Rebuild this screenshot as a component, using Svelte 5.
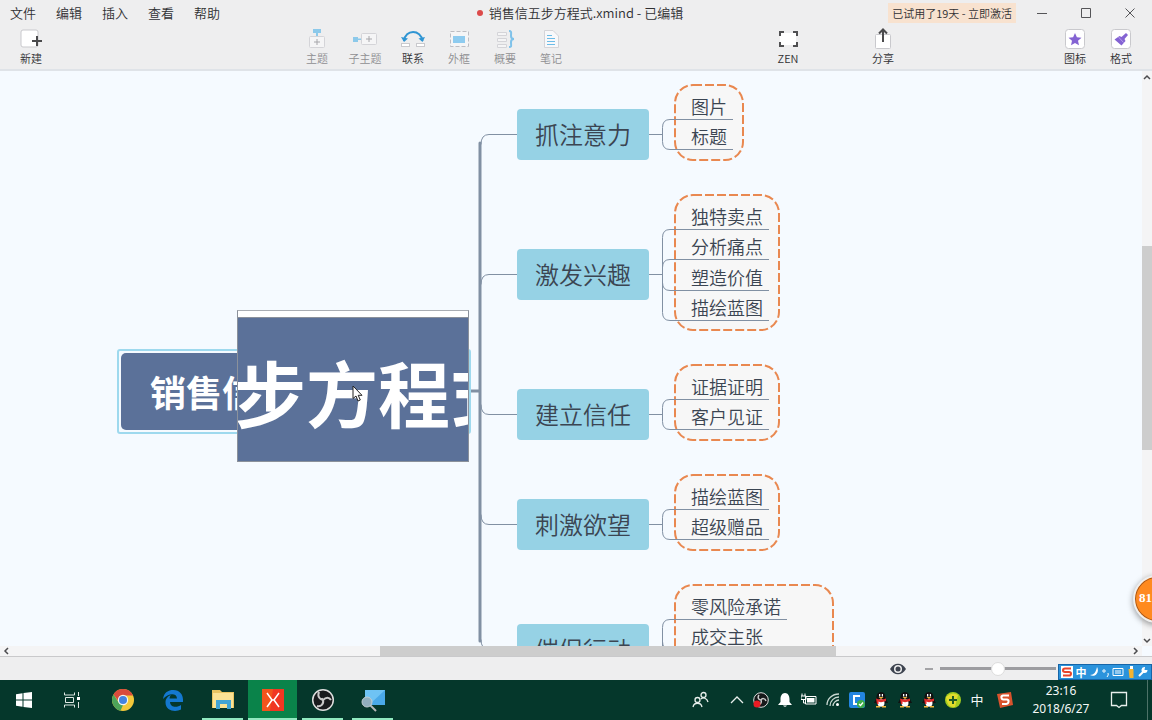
<script lang="ts">
  type Branch = {
    title: string;
    y: number;
    firstLine: number;
    children: string[];
    right?: number;
  };

  const menus = ["文件", "编辑", "插入", "查看", "帮助"];

  // y is the vertical centre of a main topic, firstLine the underline of its first subtopic
  const branches: Branch[] = [
    { title: "抓注意力", y: 63, firstLine: 48, children: ["图片", "标题"] },
    { title: "激发兴趣", y: 203, firstLine: 158, children: ["独特卖点", "分析痛点", "塑造价值", "描绘蓝图"] },
    { title: "建立信任", y: 343, firstLine: 328, children: ["证据证明", "客户见证"] },
    { title: "刺激欲望", y: 453, firstLine: 438, children: ["描绘蓝图", "超级赠品"] },
    { title: "催促行动", y: 578, firstLine: 548, children: ["零风险承诺", "成交主张"], right: 833 },
  ];

  const rootY = 320;
  const trunkX = 480;
  const rowPitch = 30.4;

  const lineY = (b: Branch, i: number) => Math.round(b.firstLine + i * rowPitch) + 0.5;
  const lineEnd = (text: string) => 691 + text.length * 18 + 6;
  const boundaryRight = (b: Branch) => b.right ?? lineEnd(b.children[0]) + 10;

  function branchPath(b: Branch) {
    const y = b.y + 0.5;
    const from = b.y < rootY ? y + 10 : y - 10;
    return `M${trunkX + 1} ${from}Q${trunkX + 1} ${y} ${trunkX + 9} ${y}H517`;
  }

  function childPath(b: Branch, i: number) {
    const y = lineY(b, i);
    const turn = y < b.y ? y + 8 : y - 8;
    return `M662.5 ${b.y}V${turn}Q662.5 ${y} 670 ${y}H${lineEnd(b.children[i])}`;
  }

  let zoom = 50;
</script>

<div class="desktop">
  <header class="titlebar">
    <nav>
      {#each menus as menu}
        <button>{menu}</button>
      {/each}
    </nav>
    <h1><span class="dirty"></span>销售信五步方程式.xmind - 已编辑</h1>
    <div class="window-tools">
      <button class="trial">已试用了19天 - 立即激活</button>
      <button class="win" aria-label="最小化"><svg width="12" height="12"><path d="M1 6.500H11" /></svg></button>
      <button class="win" aria-label="最大化"><svg width="12" height="12"><path d="M1.500 1.500H10.500V10.500H1.500Z" /></svg></button>
      <button class="win" aria-label="关闭"><svg width="12" height="12"><path d="M1.500 1.500L10.500 10.500M10.500 1.500L1.500 10.500" /></svg></button>
    </div>
  </header>

  <div class="toolbar">
    <div class="tools">
      <button class="tool">
        <svg width="26" height="24" viewBox="0 0 26 24">
          <rect x="3" y="3" width="17" height="17" rx="2" fill="#fff" stroke="#c9c9cd" />
          <path d="M14 14H24M19 9V19" stroke="#4a4a4c" stroke-width="2" />
        </svg>
        新建
      </button>
    </div>
    <div class="tools">
      <button class="tool" disabled>
        <svg width="26" height="24" viewBox="0 0 26 24">
          <path d="M9 2H17V6H14V9H12V6H9Z" fill="#8cc9ea" />
          <rect x="5.500" y="9.500" width="15" height="11" rx="1" fill="#f5f5f6" stroke="#d4d4d8" />
          <path d="M10 15H16M13 12V18" stroke="#a6a6aa" />
        </svg>
        主题
      </button>
      <button class="tool long" disabled>
        <svg width="26" height="24" viewBox="0 0 26 24">
          <path d="M1 10H6V11.500H9V13H6V15H1Z" fill="#8cc9ea" />
          <rect x="9.500" y="6.500" width="15" height="11" rx="1" fill="#f5f5f6" stroke="#d4d4d8" />
          <path d="M14 12H20M17 9V15" stroke="#a6a6aa" />
        </svg>
        子主题
      </button>
      <button class="tool">
        <svg width="26" height="24" viewBox="0 0 26 24">
          <path d="M4 14C5 2 21 2 22.500 14" fill="none" stroke="#2f95d3" stroke-width="2" />
          <path d="M1 10L4 15L8 11.500ZM18.500 11.500L22.500 15L25 10Z" fill="#2f95d3" />
          <rect x="1.500" y="16.500" width="8" height="3" fill="#fff" stroke="#c9c9cd" />
          <rect x="16.500" y="16.500" width="8" height="3" fill="#fff" stroke="#c9c9cd" />
        </svg>
        联系
      </button>
      <button class="tool" disabled>
        <svg width="26" height="24" viewBox="0 0 26 24">
          <rect x="4.500" y="4.500" width="18" height="15" fill="#f5f5f6" stroke="#bdbdc2" stroke-dasharray="4 2" />
          <rect x="7" y="9" width="12" height="7" fill="#8ecbef" />
        </svg>
        外框
      </button>
      <button class="tool" disabled>
        <svg width="26" height="24" viewBox="0 0 26 24">
          <path d="M5.500 5.500H14.500V8.500H5.500ZM5.500 11.500H14.500V14.500H5.500ZM5.500 17.500H14.500V20.500H5.500Z" fill="#f5f5f6" stroke="#d4d4d8" />
          <path d="M17 4C20 4 19 6 19 9C19 11 20 12 22 12C20 12 19 13 19 15C19 19 20 20 17 20" fill="none" stroke="#7fc2ea" stroke-width="2" />
        </svg>
        概要
      </button>
      <button class="tool" disabled>
        <svg width="26" height="24" viewBox="0 0 26 24">
          <path d="M6.500 3.500H15L20.500 9V20.500H6.500Z" fill="#f8f8fa" stroke="#d4d4d8" />
          <path d="M9 8.500H14M9 11.500H17M9 14.500H17M9 17.500H17" stroke="#6cbce8" />
        </svg>
        笔记
      </button>
    </div>
    <div class="tools wide">
      <button class="tool">
        <svg width="26" height="24" viewBox="0 0 26 24">
          <rect x="5" y="6" width="16" height="12" fill="#fff" />
          <path d="M5 9V5H9M18 5H22V9M22 15V19H18M9 19H5V15" fill="none" stroke="#505052" stroke-width="2" />
        </svg>
        ZEN
      </button>
      <button class="tool">
        <svg width="26" height="24" viewBox="0 0 26 24">
          <rect x="5.500" y="7.500" width="15" height="14" rx="1" fill="#fff" stroke="#c9c9cd" />
          <path d="M13 15V3M9 6.500L13 2.500L17 6.500" fill="none" stroke="#4a4a4c" stroke-width="2" />
        </svg>
        分享
      </button>
    </div>
    <div class="tools end">
      <button class="tool">
        <svg width="26" height="24" viewBox="0 0 26 24">
          <rect x="3.500" y="2.500" width="19" height="19" rx="3" fill="#fff" stroke="#c9c9cd" />
          <path d="M13 6L14.900 10.200L19.500 10.700L16 13.700L17 18.200L13 15.900L9 18.200L10 13.700L6.500 10.700L11.100 10.200Z" fill="#8463d3" />
        </svg>
        图标
      </button>
      <button class="tool">
        <svg width="26" height="24" viewBox="0 0 26 24">
          <rect x="3.500" y="2.500" width="19" height="19" rx="3" fill="#fff" stroke="#c9c9cd" />
          <path d="M18 6L20 8L16.500 12L17.500 14L13.500 18.500L6.500 12.500L11.500 9L13.500 10Z" fill="#8463d3" />
          <path d="M10.500 10L15.500 15.500" stroke="#b59ceb" />
        </svg>
        格式
      </button>
    </div>
  </div>

  <main class="pane">
    <div class="canvas">
      <svg class="wires">
        {#each branches as b}
          <rect
            class="boundary"
            x="675"
            y={b.firstLine - 34}
            width={boundaryRight(b) - 675}
            height={b.right ? 110 : (b.children.length - 1) * 30 + 45}
            rx="18"
          />
          <path d={branchPath(b)} />
          <path d="M649 {b.y + 0.5}H662" />
          {#each b.children as _, i}
            <path d={childPath(b, i)} />
          {/each}
        {/each}
        <path class="trunk" d="M{trunkX} 72V570M468 {rootY}H{trunkX}" />
      </svg>

      <div class="root-topic"><span>销售信五步方程式</span></div>

      {#each branches as b}
        <div class="topic" style:top="{b.y - 25}px">{b.title}</div>
        {#each b.children as child, i}
          <div class="subtopic" style:top="{Math.round(b.firstLine + i * rowPitch) - 25}px">{child}</div>
        {/each}
      {/each}

      <div class="magnifier"><span>步方程式</span></div>
      <svg class="cursor" width="12" height="18" viewBox="0 0 12 18">
        <path d="M1 1V13.500L4 11L6 16L8.300 15L6.200 10.300H10Z" fill="#fff" stroke="#222" />
      </svg>
    </div>

    <div class="scroll vertical">
      <svg width="10" height="12"><path d="M2 8L5 5L8 8" /></svg>
      <i class="before"></i><i class="thumb"></i><i class="after"></i>
      <svg width="10" height="12"><path d="M2 5L5 8L8 5" /></svg>
    </div>
    <div class="scroll horizontal">
      <svg width="14" height="10"><path d="M8 2L5 5L8 8" /></svg>
      <i class="before"></i><i class="thumb"></i><i class="after"></i>
      <svg width="14" height="10"><path d="M6 2L9 5L6 8" /></svg>
    </div>
    <div class="bubble">81</div>
  </main>

  <footer class="status">
    <button class="eye" aria-label="显示">
      <svg width="18" height="12" viewBox="0 0 18 12">
        <path d="M1 6C5 -1 13 -1 17 6C13 13 5 13 1 6Z" fill="#3d434f" />
        <circle cx="9" cy="6" r="4" fill="#eee" />
        <circle cx="9" cy="6" r="2.500" fill="#3d434f" />
      </svg>
    </button>
    <button class="minus" aria-label="缩小"><svg width="8" height="2"><path d="M0 1H8" stroke="#a3a3a6" stroke-width="2" /></svg></button>
    <input type="range" min="0" max="100" bind:value={zoom} aria-label="缩放" />
    <div class="ime">
      <svg width="12" height="12" viewBox="0 0 12 12">
        <rect width="12" height="12" fill="#fff" />
        <path d="M10 2.500H4Q2 2.500 2 4.200T4 6H8Q10 6 10 7.800T8 9.500H2" fill="none" stroke="#e8452c" stroke-width="2" />
      </svg>
      <b>中</b>
      <svg width="10" height="12" viewBox="0 0 10 12"><path d="M8 1C11 6 6 12 1 9C5 9 7 6 8 1Z" fill="#fff" /></svg>
      <svg width="8" height="12" viewBox="0 0 8 12"><circle cx="2" cy="5" r="1.200" fill="none" stroke="#fff" /><path d="M6 7Q7 9 5 11" fill="none" stroke="#fff" /></svg>
      <svg width="12" height="12" viewBox="0 0 12 12"><path d="M1 2.500H11V9.500H1ZM3 5H9M3 7H9" fill="none" stroke="#fff" /></svg>
      <svg width="8" height="12" viewBox="0 0 8 12"><path d="M3 0H6V3H3Z" fill="#fff" /><path d="M1.500 3H6.500V12H2.500Z" fill="#f3b331" /></svg>
      <svg width="12" height="12" viewBox="0 0 12 12"><path d="M2 10L7 5" stroke="#fff" stroke-width="2" /><path d="M10.500 4A3 3 0 1 1 8 1L7.500 4Z" fill="#fff" /></svg>
    </div>
  </footer>

  <div class="taskbar">
    <div class="system">
      <button aria-label="开始">
        <svg width="18" height="18" viewBox="0 0 18 18"><path d="M1 3.300L7.500 2.300V8.500H1ZM8.500 2.100L17 1V8.500H8.500ZM1 9.500H7.500V15.700L1 14.700ZM8.500 9.500H17V17L8.500 15.900Z" fill="#fff" /></svg>
      </button>
      <button aria-label="任务视图">
        <svg width="18" height="18" viewBox="0 0 18 18">
          <path d="M1.500 1.500V4H11.500V1.500M1.500 16.500V14H11.500V16.500M2.500 6.500H10.500V11.500H2.500ZM15.500 1V5M15.500 11V17" fill="none" stroke="#dfe8e4" />
          <rect x="14" y="6" width="3" height="3" fill="#fff" />
        </svg>
      </button>
    </div>
    <div class="apps">
      <button aria-label="Chrome">
        <svg width="24" height="24" viewBox="0 0 24 24">
          <circle cx="12" cy="12" r="11" fill="#f4c83a" />
          <path d="M2.500 6.500A11 11 0 0 1 22 7.500H12L8 14Z" fill="#d94b3d" />
          <path d="M2.500 6.500L8 15L12 17L9.500 22.700A11 11 0 0 1 2.500 6.500Z" fill="#4da45a" />
          <circle cx="12" cy="12" r="5.200" fill="#f5f5f5" />
          <circle cx="12" cy="12" r="4" fill="#4583e0" />
        </svg>
      </button>
      <button aria-label="Edge">
        <svg width="24" height="24" viewBox="0 0 24 24"><path d="M2 11C3 4.500 7 2 12.500 2C18.500 2 22 6.500 22 11.500V14H9C9.500 20 16.500 19.500 20 17V21.500C14.500 24.500 4.500 23 4.500 14.500C4.500 10.500 7 8 10 7C9 8 8.600 9.300 8.600 10.500H16C16 4.500 7 5 2 11Z" fill="#1478cf" /></svg>
      </button>
      <button class="open" aria-label="文件资源管理器">
        <svg width="24" height="24" viewBox="0 0 24 24">
          <path d="M1 2H9L11 4H23V20H1Z" fill="#e9c562" />
          <path d="M2 5H22V20H2Z" fill="#fbe394" />
          <path d="M5 12H20V21H16V16H9V21H5Z" fill="#43a5d4" />
        </svg>
      </button>
      <button class="open active" aria-label="XMind">
        <svg width="24" height="24" viewBox="0 0 24 24">
          <rect x="1" y="1" width="22" height="22" fill="#f03622" />
          <path d="M1 1H12L9 23H1Z" fill="#f2541c" />
          <path d="M6 5L11 12H13L18 5M6 19L11 12M13 12L18 19" fill="none" stroke="#fff" stroke-width="1.500" />
        </svg>
      </button>
      <button class="open" aria-label="OBS">
        <svg width="24" height="24" viewBox="0 0 24 24">
          <circle cx="12" cy="12" r="10.300" fill="#191b1d" stroke="#dedede" stroke-width="1.500" />
          <path d="M8 4C6 9 9 11 12 12M12 12C15 9 18 9 20 12M12 12C13 16 10 19 6 18M12 12L10.500 10.500" fill="none" stroke="#c9c9c9" stroke-width="2" />
        </svg>
      </button>
      <button class="open" aria-label="放大镜">
        <svg width="26" height="24" viewBox="0 0 26 24">
          <path d="M5 2H25V17H5Z" fill="#4aa9e8" />
          <path d="M5 2H25L9 17H5Z" fill="#6fc3f4" />
          <path d="M10 17L16 23" stroke="#b8b8b8" stroke-width="2" />
          <circle cx="7" cy="14" r="5" fill="#91aebd" stroke="#c1cdd2" />
        </svg>
      </button>
    </div>

    <div class="tray">
      <svg class="people" width="18" height="18" viewBox="0 0 18 18"><g fill="none" stroke="#e8efec" stroke-width="1.300"><circle cx="11.500" cy="4" r="2.500" /><circle cx="5.500" cy="9" r="2.500" /><path d="M1 16C2 11 9 11 10 16M9 8C11 6 15 7 16 11" /></g></svg>
      <svg width="16" height="16" viewBox="0 0 16 16"><path d="M2 11L8 5L14 11" fill="none" stroke="#e8efec" stroke-width="1.300" /></svg>
      <svg width="16" height="16" viewBox="0 0 16 16"><circle cx="8" cy="8" r="7.300" fill="#17191a" stroke="#ddd" /><path d="M6 3C4 6 6 8 8 8C9 6 12 6 13 9M8 8C9 11 7 13 5 12" fill="none" stroke="#ccc" stroke-width="1.500" /><circle cx="4" cy="12" r="3.500" fill="#ec1c24" /></svg>
      <svg width="16" height="16" viewBox="0 0 16 16"><path d="M8 1C11 1 12.500 4 12.500 7V10L15 13H1L3.500 10V7C3.500 4 5 1 8 1ZM6 13.500H10Q8 16 6 13.500Z" fill="#fff" /></svg>
      <svg width="16" height="16" viewBox="0 0 16 16"><path d="M4.500 4.500H15V12H4.500ZM1 1.500V4M4 1.500V4M0 4H5V7.500H0ZM2.500 7.500V11H4" fill="none" stroke="#fff" /><rect x="6" y="6" width="7.500" height="4.500" fill="#fff" /></svg>
      <svg width="16" height="16" viewBox="0 0 16 16"><path d="M2 13C2 7 7 2 14 2M5 14C5 9 9 5 14 5M8 14C8 11 11 8 14 8" fill="none" stroke="#c9d8d1" stroke-width="1.300" /><circle cx="12.500" cy="12.500" r="1.500" fill="#fff" /></svg>
      <svg width="16" height="16" viewBox="0 0 16 16"><rect width="16" height="16" rx="2" fill="#2385e0" /><path d="M11 4H5V12H8" fill="none" stroke="#fff" stroke-width="2" /><circle cx="12" cy="12" r="4" fill="#3dae49" /><path d="M10 12L11.500 13.500L14 10.500" fill="none" stroke="#fff" stroke-width="1.300" /></svg>
      {#each [1, 2, 3] as _}
        <svg width="16" height="16" viewBox="0 0 16 16">
          <path d="M8 0C12 0 12.500 4 12.500 6L15 11L12.500 11Q12 15 8 15T3.500 11L1 11L3.500 6C3.500 4 4 0 8 0Z" fill="#111" />
          <ellipse cx="8" cy="11" rx="3.500" ry="3.800" fill="#fff" />
          <path d="M3 6.500Q8 8.500 13 6.500V9Q8 11 5.500 9.500V12H4Z" fill="#e02b2b" />
          <path d="M5.500 5H10.500L8 7ZM3 14H7V15.500H3ZM9 14H13V15.500H9Z" fill="#f4b63c" />
          <path d="M6 2H7.300V4.500H6ZM8.800 2H10V4.500H8.800Z" fill="#fff" />
        </svg>
      {/each}
      <svg width="16" height="16" viewBox="0 0 16 16"><circle cx="8" cy="8" r="8" fill="#a3cc1f" /><path d="M1 5Q7 -1 13 3L10 15Q2 16 1 5Z" fill="#e2dc2d" /><path d="M8 4V12M4 8H12" stroke="#205b25" stroke-width="2" /></svg>
      <span class="lang">中</span>
      <svg class="sogou" width="16" height="16" viewBox="0 0 16 16"><path d="M0 2L14 0L16 13L3 16Z" fill="#d9532d" /><path d="M12 3.500H6Q4 4 4.500 6T7 7.500H10Q12 8 11.500 10T9 12H5" fill="none" stroke="#fff" stroke-width="2" /></svg>
    </div>
    <time>23:16<br />2018/6/27</time>
    <button class="notice" aria-label="通知">
      <svg width="18" height="18" viewBox="0 0 18 18"><path d="M1.500 1.500H16.500V14.500H11.500L9 16.500L6.500 14.500H1.500Z" fill="none" stroke="#e8efec" stroke-width="1.300" /></svg>
    </button>
    <span class="peek"></span>
  </div>
</div>

<style>
  :global(body) {
    margin: 0;
    font-family: "Noto Sans CJK SC", "Noto Sans", sans-serif;
    font-weight: 350;
  }

  button {
    padding: 0;
    border: 0;
    background: none;
    color: inherit;
    font: inherit;
  }

  svg {
    display: block;
    flex: none;
  }

  .desktop {
    display: grid;
    grid-template-rows: 25px 46px 1fr 24px 40px;
    height: 100vh;
    overflow: hidden;
    background: #eeeeef;
    color: #303033;
  }

  /* Title bar */
  .titlebar {
    display: grid;
    grid-template-columns: 1fr auto 1fr;
    align-items: center;
    font-size: 13px;
    line-height: 24px;

    & nav {
      display: flex;
      gap: 20px;
      padding-left: 10px;
    }

    & h1 {
      display: flex;
      align-items: center;
      gap: 6px;
      margin: 0;
      padding-left: 8px;
      font-size: 13px;
      font-weight: 350;
    }
  }

  .dirty {
    width: 6px;
    height: 6px;
    border-radius: 50%;
    background: #dc4a4a;
  }

  .window-tools {
    display: flex;
    justify-content: flex-end;
    align-items: center;
  }

  .trial {
    margin-right: 4px;
    padding: 0 4px;
    background: #f8e2cf;
    font-size: 11px;
    line-height: 20px;
  }

  .win {
    display: grid;
    place-items: center;
    width: 44px;
    height: 24px;

    & path {
      fill: none;
      stroke: #555558;
    }
  }

  /* Toolbar */
  .toolbar {
    display: grid;
    grid-template-columns: 286fr 463fr 287fr 100px;
    padding: 0 8px;
    border-bottom: 2px solid #dfe3e8;
  }

  .tools {
    display: flex;
  }

  .wide {
    gap: 49px;
    padding-left: 8px;
  }

  .end {
    justify-content: flex-end;
  }

  .tool {
    display: flex;
    flex-direction: column;
    align-items: center;
    width: 46px;
    padding-top: 2px;
    font-size: 11px;
    line-height: 14px;
    white-space: nowrap;

    &:disabled {
      color: #8e8e92;
    }
  }

  .long {
    width: 50px;
  }

  /* Mind map */
  .pane {
    position: relative;
    display: grid;
    grid-template-columns: 1fr 10px;
    grid-template-rows: 1fr 10px;
    min-height: 0;
    background: #f5faff;
  }

  .canvas {
    position: relative;
    min-height: 0;
    overflow: hidden;
    color: #3b4552;
  }

  .wires {
    position: absolute;
    width: 100%;
    height: 100%;

    & path {
      fill: none;
      stroke: #8190a3;
    }

    & .trunk {
      stroke-width: 3;
      stroke-linecap: round;
    }

    & .boundary {
      fill: #f7f7f7;
      stroke: #e98850;
      stroke-width: 2;
      stroke-dasharray: 9 3;
    }
  }

  .root-topic {
    position: absolute;
    left: 117px;
    top: 278px;
    box-sizing: border-box;
    padding: 2px;
    border: 2px solid #9ed9ee;
    border-radius: 3px;

    & span {
      display: block;
      padding: 0 29px;
      border-radius: 5px;
      background: #5b7199;
      color: #fff;
      font-size: 36px;
      font-weight: 700;
      line-height: 77px;
    }
  }

  .topic {
    position: absolute;
    left: 517px;
    padding: 0 18px 2px;
    border-radius: 4px;
    background: #96d2e5;
    font-size: 24px;
    line-height: 49px;
  }

  .subtopic {
    position: absolute;
    left: 691px;
    font-size: 18px;
    line-height: 25px;
  }

  .magnifier {
    position: absolute;
    left: 237px;
    top: 239px;
    box-sizing: border-box;
    width: 232px;
    height: 152px;
    overflow: hidden;
    border: 1px solid #8b919b;
    border-top-color: #a9adb3;
    background: #fff;

    & span {
      display: block;
      margin-top: 6px;
      padding-bottom: 6px;
      border-top: 1px solid #8b919b;
      background: #5b7199;
      color: #fff;
      font-size: 72px;
      font-weight: 700;
      line-height: 146px;
      text-indent: -4px;
      white-space: nowrap;
    }
  }

  .cursor {
    position: absolute;
    left: 352px;
    top: 314px;
  }

  .scroll {
    display: flex;
    background: #f4f4f5;

    & path {
      fill: none;
      stroke: #4c4c4f;
      stroke-width: 1.5;
    }
  }

  .thumb {
    background: #cdcdcd;
  }

  .vertical {
    flex-direction: column;

    & .before {
      flex: 163;
    }
    & .thumb {
      flex: 205;
    }
    & .after {
      flex: 184;
    }
  }

  .horizontal {
    & .before {
      flex: 366;
    }
    & .thumb {
      flex: 456;
    }
    & .after {
      flex: 292;
    }
  }

  .bubble {
    position: absolute;
    right: -29px;
    bottom: 33px;
    box-sizing: border-box;
    width: 48px;
    height: 48px;
    padding-left: 4px;
    border: 2px solid #eee;
    border-radius: 50%;
    box-shadow: inset 0 0 0 1px #a8571a, 0 2px 6px #0006;
    background: #ff8a1f;
    color: #fff;
    font: bold 13px/42px "Liberation Serif", serif;
  }

  /* Status bar */
  .status {
    position: relative;
    display: flex;
    justify-content: flex-end;
    align-items: center;
    box-sizing: border-box;
    padding-right: 96px;
    border-top: 1px solid #c9c9cb;

    & input {
      width: 116px;
      height: 14px;
      margin: 0 0 0 7px;
      appearance: none;
      background: linear-gradient(#9c9ca0, #9c9ca0) center / 100% 3px no-repeat;
    }

    & input::-webkit-slider-thumb {
      width: 14px;
      height: 14px;
      appearance: none;
      border: 1px solid #dcdcdc;
      border-radius: 50%;
      background: #fff;
    }
  }

  .minus {
    margin-left: 18px;
  }

  .ime {
    position: absolute;
    right: 0;
    bottom: 0;
    display: flex;
    align-items: center;
    justify-content: space-between;
    box-sizing: border-box;
    width: 94px;
    height: 16px;
    padding: 0 2px;
    border: 1px solid #1665a8;
    background: #2b93dc;
    color: #fff;
    font-size: 11px;
    line-height: 14px;
  }

  /* Taskbar */
  .taskbar {
    display: flex;
    align-items: center;
    background: #05372b;
    color: #f4f8f6;
    font-weight: 400;

    & button {
      display: grid;
      place-items: center;
      height: 40px;
    }
  }

  .system {
    display: flex;

    & button {
      width: 48px;
    }
  }

  .apps {
    display: flex;
    gap: 1px;
    padding-left: 2px;

    & button {
      position: relative;
      width: 49px;
    }

    & .open::after {
      content: "";
      position: absolute;
      right: 4px;
      bottom: 0;
      left: 4px;
      height: 2px;
      background: #91e9c0;
    }

    & .active {
      background: #0a834a;
    }

    & .active::after {
      right: 0;
      left: 0;
    }
  }

  .tray {
    display: flex;
    align-items: center;
    gap: 8px;
    margin-left: auto;
  }

  .people {
    margin-right: 11px;
  }

  .lang {
    width: 16px;
    font-size: 13px;
    line-height: 16px;
    text-align: center;
  }

  .sogou {
    margin-left: 4px;
  }

  time {
    width: 96px;
    font-family: "Noto Sans", sans-serif;
    font-size: 12px;
    line-height: 18px;
    text-align: center;
  }

  .notice {
    width: 20px;
    margin-right: 18px;
  }

  .peek {
    align-self: stretch;
    width: 4px;
    border-left: 1px solid #4d7268;
  }
</style>
